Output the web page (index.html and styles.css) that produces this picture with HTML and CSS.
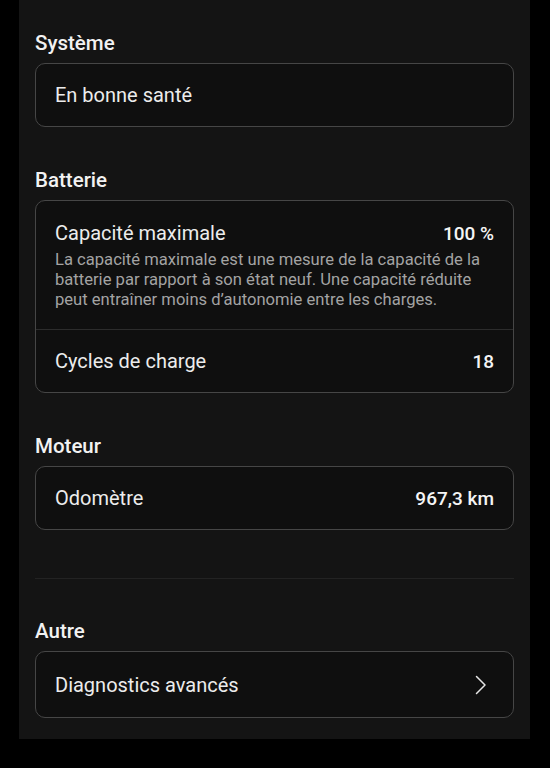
FILE: index.html
```html
<!DOCTYPE html>
<html lang="fr">
<head>
<meta charset="utf-8">
<link rel="stylesheet" href="styles.css">
</head>
<body>
<main class="panel">
  <section class="group">
    <h2 class="heading">Système</h2>
    <div class="card">
      <div class="row"><span class="label">En bonne santé</span></div>
    </div>
  </section>

  <section class="group">
    <h2 class="heading">Batterie</h2>
    <div class="card">
      <div class="row row-tall">
        <div class="row-line">
          <span class="label">Capacité maximale</span>
          <span class="value">100 %</span>
        </div>
        <p class="desc">La capacité maximale est une mesure de la capacité de la batterie par rapport à son état neuf. Une capacité réduite peut entraîner moins d’autonomie entre les charges.</p>
      </div>
      <div class="row row-sep">
        <span class="label">Cycles de charge</span>
        <span class="value">18</span>
      </div>
    </div>
  </section>

  <section class="group">
    <h2 class="heading">Moteur</h2>
    <div class="card">
      <div class="row">
        <span class="label">Odomètre</span>
        <span class="value">967,3 km</span>
      </div>
    </div>
  </section>

  <hr class="divider">

  <section class="group group-last">
    <h2 class="heading">Autre</h2>
    <div class="card">
      <div class="row row-link">
        <span class="label">Diagnostics avancés</span>
        <svg class="chevron" width="14" height="20" viewBox="0 0 14 20" fill="none">
          <path d="M2.5 1.5 L11 10 L2.5 18.5" stroke="#e6e6e6" stroke-width="1.5" stroke-linecap="round" stroke-linejoin="round"/>
        </svg>
      </div>
    </div>
  </section>
</main>
</body>
</html>
```

FILE: styles.css
```css
html, body {
  margin: 0;
  padding: 0;
  background: #000;
}

body {
  font-family: Roboto, "Noto Sans", sans-serif;
  color: #ececec;
  width: 550px;
  height: 768px;
}

.panel {
  margin-left: 19px;
  width: 511px;
  height: 739px;
  background: #141414;
  box-sizing: border-box;
  padding: 31px 16px 0 16px;
}

.group {
  display: flex;
  flex-direction: column;
  gap: 8px;
  margin-bottom: 41px;
}

.group-last {
  margin-bottom: 0;
}

.heading {
  margin: 0;
  font-size: 20.5px;
  line-height: 24px;
  font-weight: 500;
  color: #f2f2f2;
}

.card {
  border: 1px solid #464646;
  border-radius: 10px;
  background: #0f0f0f;
}

.row {
  display: flex;
  justify-content: space-between;
  align-items: center;
  height: 62px;
  padding: 0 19px;
}

.row-tall {
  display: block;
  height: auto;
  padding: 20px 19px 19px;
}

.row-line {
  display: flex;
  justify-content: space-between;
  align-items: center;
  height: 24px;
}

.row-sep {
  border-top: 1px solid #2c2c2c;
}

.row-link {
  height: 65px;
}

.label {
  font-size: 20px;
  color: #ececec;
}

.value {
  font-size: 19px;
  font-weight: 500;
  color: #f5f5f5;
}

.desc {
  margin: 5px 0 0;
  max-width: 440px;
  font-size: 16.6px;
  line-height: 20px;
  color: #a3a3a3;
}

.chevron {
  display: block;
  margin-right: 6px;
}

.divider {
  margin: 48px 0 40px;
  border: 0;
  border-top: 1px solid #232323;
  height: 0;
}
```
